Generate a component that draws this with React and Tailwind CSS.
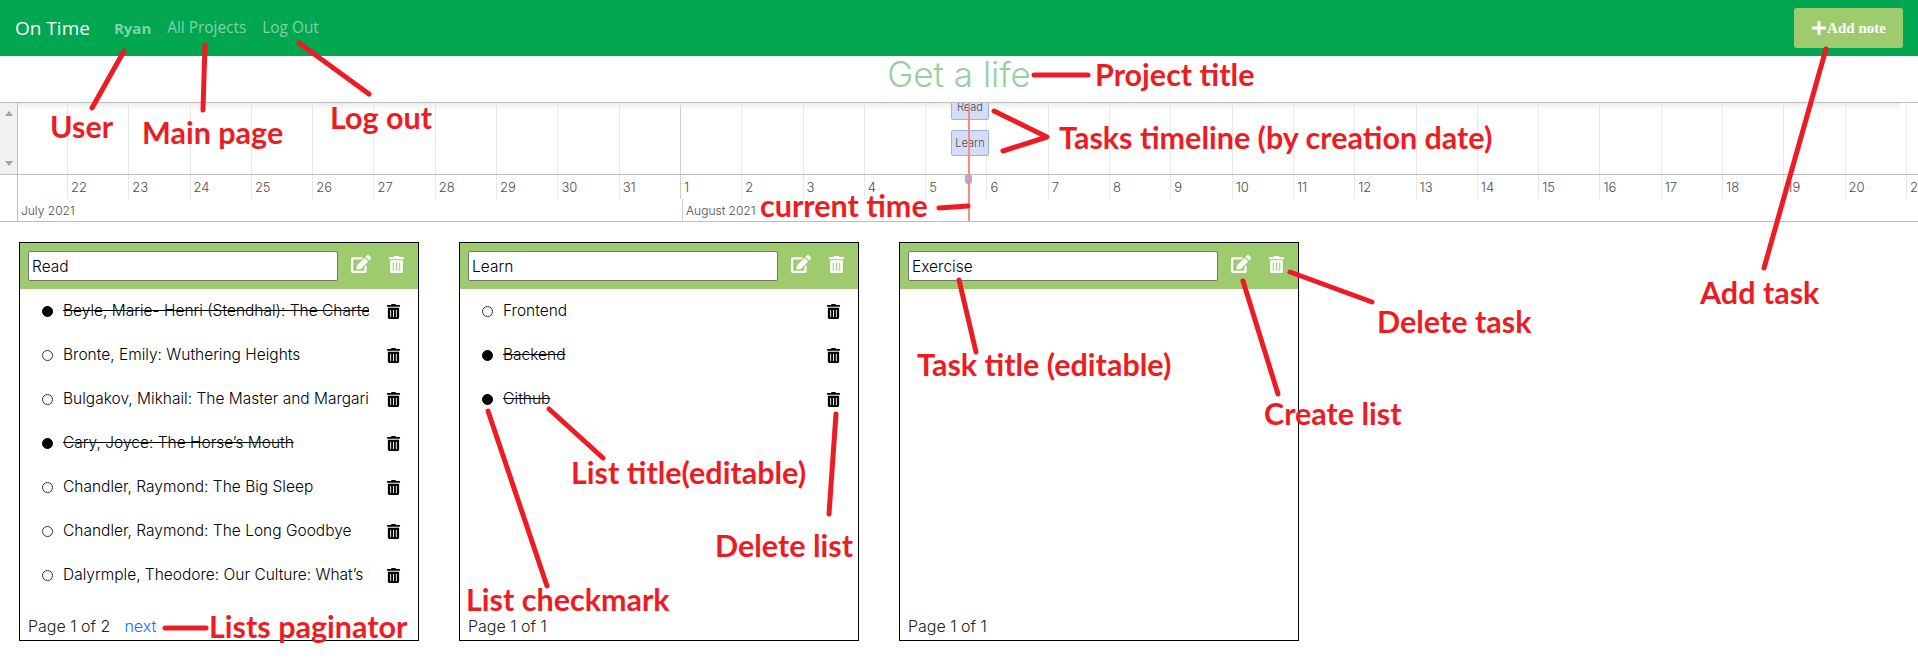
import React from 'react';
import { FaPlus, FaEdit, FaTrashAlt } from 'react-icons/fa';

const days = [22, 23, 24, 25, 26, 27, 28, 29, 30, 31, 1, 2, 3, 4, 5, 6, 7, 8, 9, 10, 11, 12, 13, 14, 15, 16, 17, 18, 19, 20, 21];

const tasks = [
    {
        title: 'Read',
        footer: 'Page 1 of 2',
        next: true,
        lists: [
            { name: 'Beyle, Marie- Henri (Stendhal): The Charterhouse of Parma', done: true },
            { name: 'Bronte, Emily: Wuthering Heights' },
            { name: 'Bulgakov, Mikhail: The Master and Margarita' },
            { name: 'Cary, Joyce: The Horse’s Mouth', done: true },
            { name: 'Chandler, Raymond: The Big Sleep' },
            { name: 'Chandler, Raymond: The Long Goodbye' },
            { name: 'Dalyrmple, Theodore: Our Culture: What’s Left of It' },
        ],
    },
    {
        title: 'Learn',
        footer: 'Page 1 of 1',
        lists: [
            { name: 'Frontend' },
            { name: 'Backend', done: true },
            { name: 'Github', done: true },
        ],
    },
    { title: 'Exercise', footer: 'Page 1 of 1', lists: [] },
];

const notes = [
    ['User', 'left-[50px] top-[107px]'],
    ['Main page', 'left-[142px] top-[113px]'],
    ['Log out', 'left-[330px] top-[98px]'],
    ['Project title', 'left-[1095px] top-[55px]'],
    ['Tasks timeline (by creation date)', 'left-[1059px] top-[118px]'],
    ['current time', 'left-[760px] top-[186px]'],
    ['Add task', 'left-[1700px] top-[273px]'],
    ['Lists paginator', 'left-[209px] top-[607px]'],
    ['List title(editable)', 'left-[571px] top-[453px]'],
    ['Delete list', 'left-[715px] top-[526px]'],
    ['List checkmark', 'left-[466px] top-[580px]'],
    ['Task title (editable)', 'left-[917px] top-[345px]'],
    ['Create list', 'left-[1264px] top-[394px]'],
    ['Delete task', 'left-[1377px] top-[302px]'],
];

const strokes = [
    'M124 51 L92 108',
    'M205 45 L203 110',
    'M299 43 L369 94',
    'M1034 75 L1088 75',
    'M994 111 L1047 137 L1003 151',
    'M939 208 L968 206',
    'M1826 49 L1764 268',
    'M549 409 L603 458',
    'M488 411 L547 586',
    'M836 414 L829 514',
    'M165 628 L206 628',
    'M959 280 L976 352',
    'M1243 281 L1278 394',
    'M1290 272 L1372 302',
];

const Timeline = () => {
    return (
        <div className="relative h-[120px] overflow-hidden border-y border-[#bfbfbf] font-['Inter',sans-serif] text-[#4d4d4d]">
            <div className="flex h-[72px] border-b border-[#bfbfbf]">
                <div className="flex w-[18px] shrink-0 flex-col items-center justify-between border-r border-[#bfbfbf] bg-[#f1f1f1] py-[8px]">
                    <div className="h-0 w-0 border-x-[4px] border-b-[5px] border-x-transparent border-b-[#a3a3a3]"></div>
                    <div className="h-0 w-0 border-x-[4px] border-t-[5px] border-x-transparent border-t-[#a3a3a3]"></div>
                </div>
                <div className="w-[49px] shrink-0"></div>
                {days.map((d) => (
                    <div key={d} className={d === 1 ? 'w-[61.3px] shrink-0 border-l border-[#cfcfcf]' : 'w-[61.3px] shrink-0 border-l border-[#e8e8e8]'}></div>
                ))}
            </div>
            <div className="flex h-[24px] text-[13px] font-light">
                <div className="w-[18px] shrink-0 border-r border-[#bfbfbf]"></div>
                <div className="w-[49px] shrink-0"></div>
                {days.map((d) => (
                    <div key={d} className={d === 1 ? 'w-[61.3px] shrink-0 border-l border-[#cfcfcf] pl-[3px] leading-[24px]' : 'w-[61.3px] shrink-0 border-l border-[#e8e8e8] pl-[3px] leading-[24px]'}>{d}</div>
                ))}
            </div>
            <div className="flex h-[22px] text-[12px] font-light leading-[24px]">
                <div className="w-[18px] shrink-0 border-r border-[#bfbfbf]"></div>
                <div className="w-[664px] shrink-0 pl-[3px]">July 2021</div>
                <div className="flex-1 border-l border-[#cfcfcf] pl-[3px]">August 2021</div>
            </div>

            <div className="pointer-events-none absolute inset-x-[18px] top-0 h-[7px] bg-gradient-to-b from-[#ececec] to-transparent"></div>

            {/* items sit on the time axis */}
            <div className="absolute left-[951px] top-[-10px] flex h-[27px] w-[38px] items-end justify-center rounded-[2px] border border-[#97b0f8] bg-[#d5ddf6] pb-[6px] text-[11px] font-light leading-none">Read</div>
            <div className="absolute left-[969px] top-[17px] h-[10px] w-px bg-[#97b0f8]"></div>
            <div className="absolute left-[951px] top-[27px] flex h-[26px] w-[38px] items-center justify-center rounded-[2px] border border-[#97b0f8] bg-[#d5ddf6] text-[11px] font-light leading-none">Learn</div>
            <div className="absolute left-[965px] top-[71px] h-[10px] w-[7px] rounded-[3px] bg-[#97b0f8]"></div>
            <div className="absolute bottom-0 left-[968px] top-0 w-[2px] bg-[#fb8a80]"></div>
        </div>
    );
};

const TaskCard = ({ task }) => {
    return (
        <div className="flex h-[399px] w-[400px] shrink-0 flex-col border border-black">
            <div className="flex h-[46px] items-center bg-[#9ecb6e] pl-[8px]">
                <input
                    readOnly
                    value={task.title}
                    className="h-[30px] w-[310px] rounded-[2px] border border-[#767676] bg-white px-[3px] font-['Inter',sans-serif] text-[15.5px] font-light text-black"
                />
                <FaEdit className="mb-[5px] ml-[13px] text-white" size={20} />
                <FaTrashAlt className="mb-[3px] ml-[17px] text-white" size={17} />
            </div>
            <div className="flex flex-1 flex-col">
                {task.lists.map((list) => (
                    <div key={list.name} className="flex h-[44px] items-center pl-[22px]">
                        <div className={list.done ? 'h-[11px] w-[11px] shrink-0 rounded-full border border-black bg-black' : 'h-[11px] w-[11px] shrink-0 rounded-full border border-[#333]'}></div>
                        <div className={list.done ? 'ml-[10px] w-[306px] shrink-0 overflow-hidden whitespace-nowrap text-[15.5px] font-light text-black line-through' : 'ml-[10px] w-[306px] shrink-0 overflow-hidden whitespace-nowrap text-[15.5px] font-light text-black'}>{list.name}</div>
                        <FaTrashAlt className="ml-[17px] shrink-0 text-black" size={15} />
                    </div>
                ))}
            </div>
            <div className="flex h-[26px] items-start pl-[8px] text-[16px] font-light leading-[24px] text-[#222]">
                <span>{task.footer}</span>
                {task.next && <a href="#" className="ml-[14px] text-[#0d6efd]">next</a>}
            </div>
        </div>
    );
};

export default function App() {
    return (
        <div className="relative h-[664px] w-[1918px] overflow-hidden bg-white font-['Inter',sans-serif]">
            <nav className="flex h-[56px] items-center justify-between bg-[#00a650] pl-[15px] pr-[15px] font-['Open_Sans',sans-serif]">
                <div className="flex items-center">
                    <span className="text-[19px] text-white">On Time</span>
                    <span className="ml-[24px] text-[15px] font-bold text-[#80d3a8]">Ryan</span>
                    <span className="ml-[16px] text-[15.4px] text-[#80d3a8]">All Projects</span>
                    <span className="ml-[16px] text-[15.4px] text-[#80d3a8]">Log Out</span>
                </div>
                <button className="flex h-[40px] w-[109px] items-center justify-center rounded-[3px] bg-[#9ecb6e] font-['Liberation_Serif',serif] text-[15px] font-bold text-white">
                    <FaPlus size={16} />Add note
                </button>
            </nav>
            <h1 className="h-[46px] text-center text-[35px] font-light leading-[36px] text-[#98cf9f]">Get a life</h1>
            <Timeline />
            <div className="flex gap-[40px] pl-[19px] pt-[20px]">
                {tasks.map((task) => (
                    <TaskCard key={task.title} task={task} />
                ))}
            </div>

            {/* red annotations drawn over the screenshot */}
            <svg className="pointer-events-none absolute inset-0" width="1918" height="664" fill="none" stroke="#ed1c24" strokeWidth="5" strokeLinecap="round" strokeLinejoin="round">
                {strokes.map((d) => (
                    <path key={d} d={d} />
                ))}
            </svg>
            {notes.map(([text, pos]) => (
                <span key={text} className={`absolute whitespace-nowrap font-['Lato',sans-serif] text-[30.5px] font-bold leading-[38px] text-[#ed1c24] ${pos}`}>{text}</span>
            ))}
        </div>
    );
}
